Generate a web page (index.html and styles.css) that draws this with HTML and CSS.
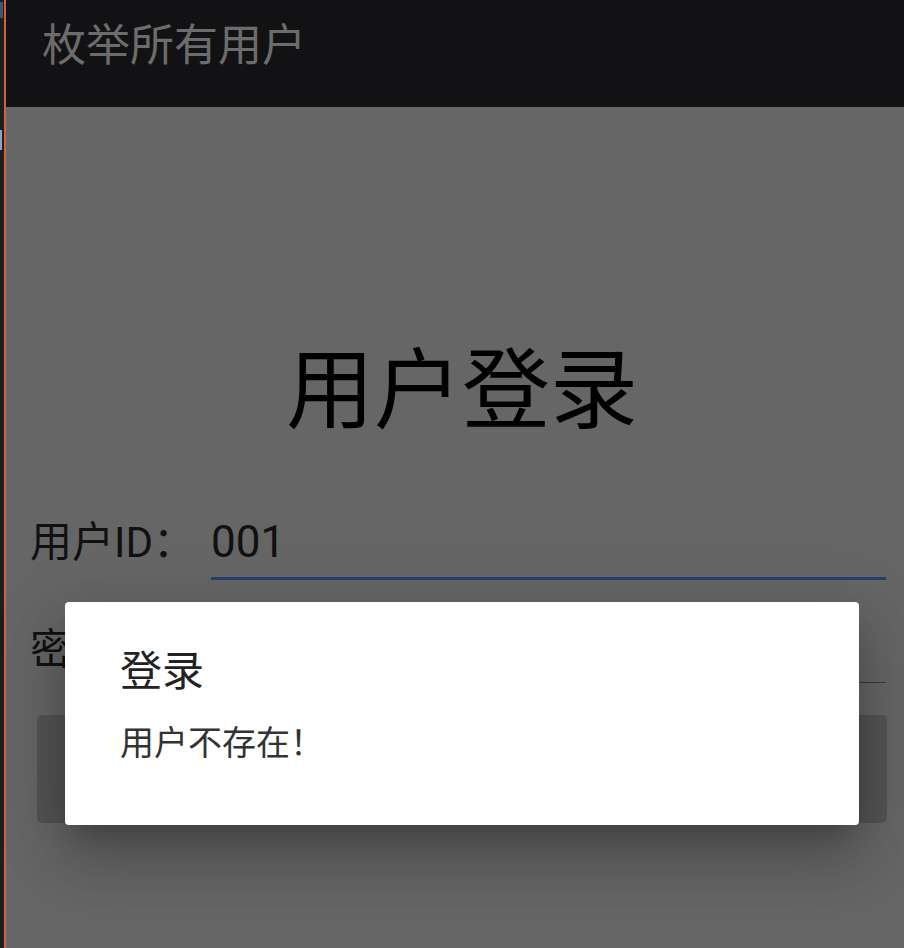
FILE: index.html
```html
<!DOCTYPE html>
<html lang="zh-CN">
<head>
<meta charset="UTF-8">
<meta name="viewport" content="width=device-width, initial-scale=1.0">
<title>用户登录</title>
<link rel="stylesheet" href="styles.css">
</head>
<body>

<div class="screen">
    <div class="side">
        <span class="side-mark"></span>
        <span class="side-tab"></span>
    </div>
    <div class="edge"></div>

    <div class="app">
        <div class="appbar">
            <div class="appbar-title">枚举所有用户</div>
        </div>

        <div class="content">
            <h1 class="heading">用户登录</h1>

            <div class="field">
                <div class="field-label">用户ID：</div>
                <div class="field-input field-focused">001</div>
            </div>

            <div class="field field-second">
                <div class="field-label">密码：</div>
                <div class="field-input">&nbsp;</div>
            </div>

            <div class="login-button">登录</div>
        </div>
    </div>

    <!-- alert dialog shown over the login form -->
    <div class="dialog">
        <div class="dialog-title">登录</div>
        <div class="dialog-message">用户不存在！</div>
    </div>
</div>

</body>
</html>
```

FILE: styles.css
```css
/* Login screen with an alert dialog on top */
body {
    margin: 0;
    background-color: #1e1f22;
    font-family: Roboto, "Noto Sans CJK SC", sans-serif;
}

.screen {
    position: relative;
    display: flex;
    width: 904px;
    height: 948px;
    overflow: hidden;
}

.side {
    position: relative;
    width: 4px;
    background-color: #1e1f22;
}

.side-mark {
    position: absolute;
    top: 2px;
    left: 0;
    width: 3px;
    height: 16px;
    background-color: #4f6f9a;
    opacity: 0.7;
}

.side-tab {
    position: absolute;
    top: 130px;
    left: 0;
    width: 2px;
    height: 20px;
    background-color: #8aa4c8;
}

.edge {
    width: 2px;
    background-color: #d3613c;
}

.app {
    flex: 1;
    display: flex;
    flex-direction: column;
}

.appbar {
    height: 107px;
    padding-left: 36px;
    box-sizing: border-box;
    background-color: #121214;
}

.appbar-title {
    padding-top: 20px;
    font-family: "Noto Sans CJK SC", sans-serif;
    font-size: 44px;
    line-height: 1;
    color: #6c6c6c;
}

.content {
    flex: 1;
    background-color: #666666;
}

.heading {
    margin: 232px 0 0 0;
    padding-left: 14px;
    font-family: "Noto Sans CJK SC", sans-serif;
    font-size: 88px;
    font-weight: normal;
    line-height: 1;
    text-align: center;
    color: #000;
}

.field {
    display: flex;
    align-items: baseline;
    margin: 88px 18px 0 24px;
}

.field-second {
    margin-top: 42px;
}

.field-label {
    font-size: 42px;
    line-height: 1;
    color: #111;
}

.field-input {
    flex: 1;
    height: 54px;
    margin-left: 16px;
    padding-bottom: 6px;
    border-bottom: 1px solid #3d3d3d;
    font-size: 44px;
    line-height: 54px;
    color: #111;
}

.field-focused {
    height: 52px;
    padding-bottom: 10px;
    border-bottom: 3px solid #27406e;
}

.login-button {
    height: 108px;
    margin: 32px 17px 0 31px;
    border-radius: 5px;
    background-color: #545454;
    font-family: "Noto Sans CJK SC", sans-serif;
    font-size: 34px;
    line-height: 108px;
    text-align: center;
    color: #333;
}

.dialog {
    position: absolute;
    left: 65px;
    top: 602px;
    width: 794px;
    height: 223px;
    padding: 45px 55px 0 55px;
    box-sizing: border-box;
    border-radius: 4px;
    background-color: #fff;
    box-shadow: 0 36px 60px 4px rgba(0, 0, 0, 0.16),
                0 14px 70px 10px rgba(0, 0, 0, 0.12),
                0 16px 24px -10px rgba(0, 0, 0, 0.22);
    font-family: "Noto Sans CJK SC", sans-serif;
}

.dialog-title {
    font-size: 42px;
    line-height: 1;
    color: #222;
}

.dialog-message {
    margin-top: 35px;
    font-size: 34px;
    line-height: 1;
    color: #333;
}
```
